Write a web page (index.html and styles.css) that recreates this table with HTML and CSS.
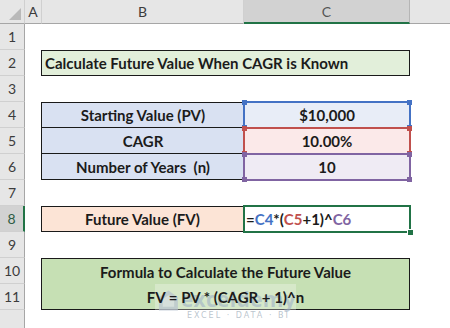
FILE: index.html
```html
<!DOCTYPE html>
<html>
<head>
<meta charset="utf-8">
<link rel="stylesheet" href="styles.css">
</head>
<body>
<div class="sheet">
  <div class="corner"><svg width="25" height="24" viewBox="0 0 25 24"><polygon points="21,8 21,20 9,20" fill="#b9b9b9"/></svg></div>
  <div class="ch">A</div>
  <div class="ch">B</div>
  <div class="ch sel">C</div>
  <div class="ch last"></div>

  <div class="rh r1">1</div>
  <div class="rh r2">2</div>
  <div class="rh r3">3</div>
  <div class="rh r4">4</div>
  <div class="rh r5">5</div>
  <div class="rh r6">6</div>
  <div class="rh r7">7</div>
  <div class="rh rsel r8">8</div>
  <div class="rh r9">9</div>
  <div class="rh r10">10</div>
  <div class="rh r11">11</div>
  <div class="rh r12"></div>

  <div class="cell title r2">Calculate Future Value When CAGR is Known</div>

  <div class="cell label r4 first">Starting Value (PV)</div>
  <div class="cell label r5">CAGR</div>
  <div class="cell label r6">Number of Years&nbsp; (n)</div>

  <div class="cell val v-blue r4">$10,000<span class="hl blue"><i class="tl"></i><i class="tr"></i><i class="bl"></i><i class="br"></i></span></div>
  <div class="cell val v-red r5">10.00%<span class="hl red"><i class="tl"></i><i class="tr"></i><i class="bl"></i><i class="br"></i></span></div>
  <div class="cell val v-purple r6">10<span class="hl purple"><i class="tl"></i><i class="tr"></i><i class="bl"></i><i class="br"></i></span></div>

  <div class="cell fvlabel r8">Future Value (FV)</div>
  <div class="cell formula r8">=<span class="c-blue">C4</span>*(<span class="c-red">C5</span>+1)^<span class="c-purple">C6</span><span class="active"><i></i></span></div>

  <div class="cell note">
    <div class="watermark">
      <svg class="wm-logo" width="22" height="24" viewBox="0 0 22 24"><polygon points="11,1 21,8 21,22 1,22 1,8" fill="#b7c3cf"/><polygon points="11,6 17,10 17,18 5,18 5,10" fill="#d6dde4"/></svg>
      <div class="wm-text">
        <div class="wm-name">exceldemy</div>
        <div class="wm-sub">EXCEL · DATA · BI</div>
      </div>
    </div>
    <div class="line">Formula to Calculate the Future Value</div>
    <div class="line">FV = PV * (CAGR + 1)^n</div>
  </div>
</div>
</body>
</html>
```
FILE: styles.css
```css
html, body {
  margin: 0;
  padding: 0;
  background: #ffffff;
}
body {
  font-family: Lato, "Open Sans", sans-serif;
  color: #1b1b1b;
}
.sheet {
  position: relative;
  display: grid;
  grid-template-columns: 25px 17px 202px 166px 40px;
  grid-template-rows: 24px repeat(12, 26px);
  width: 450px;
  height: 328px;
  overflow: hidden;
}
.corner {
  background: #e6e6e6;
  border-right: 1px solid #d0d0d0;
  border-bottom: 1px solid #a6a6a6;
  box-sizing: border-box;
}
.corner svg { display: block; }
.ch {
  background: #e6e6e6;
  border-right: 1px solid #d0d0d0;
  border-bottom: 1px solid #a6a6a6;
  box-sizing: border-box;
  display: flex;
  align-items: center;
  justify-content: center;
  color: #3c3c3c;
  font-size: 14px;
}
.ch.sel {
  background: #d2d2d2;
  border-bottom: 2px solid #217346;
  border-right: 1px solid #b5b5b5;
  color: #555;
}
.ch.last { border-right: none; }
.rh {
  grid-column: 1;
  background: #e6e6e6;
  border-right: 1px solid #a6a6a6;
  border-bottom: 1px solid #d0d0d0;
  box-sizing: border-box;
  display: flex;
  align-items: center;
  justify-content: center;
  color: #3c3c3c;
  font-size: 14px;
}
.rh.rsel {
  background: #d2d2d2;
  border-right: 2px solid #217346;
  color: #2e5d44;
}
.r1 { grid-row: 2; }
.r2 { grid-row: 3; }
.r3 { grid-row: 4; }
.r4 { grid-row: 5; }
.r5 { grid-row: 6; }
.r6 { grid-row: 7; }
.r7 { grid-row: 8; }
.r8 { grid-row: 9; }
.r9 { grid-row: 10; }
.r10 { grid-row: 11; }
.r11 { grid-row: 12; }
.r12 { grid-row: 13; }

.cell {
  box-sizing: border-box;
  font-weight: 700;
  font-size: 15px;
  display: flex;
  align-items: center;
  white-space: nowrap;
}
.title {
  grid-column: 3 / 5;
  margin-left: -1px;
  background: #e2efda;
  border: 1px solid #1a1a1a;
  padding-left: 3px;
}
.label {
  grid-column: 3;
  margin-left: -1px;
  background: #d9e1f2;
  border-left: 1px solid #1a1a1a;
  border-bottom: 1px solid #1a1a1a;
  justify-content: center;
}
.label.first { border-top: 1px solid #1a1a1a; }
.val {
  grid-column: 4;
  position: relative;
  justify-content: center;
}
.v-blue { background: #e8edf7; }
.v-red { background: #fbe9e9; }
.v-purple { background: #efebf4; }
.hl {
  position: absolute;
  left: -1px;
  right: -1px;
  top: -1px;
  bottom: -1px;
  border: 2px solid currentColor;
}
.hl.blue { color: #4472c4; }
.hl.red { color: #c0504d; }
.hl.purple { color: #8064a2; }
.hl i {
  position: absolute;
  width: 5px;
  height: 5px;
  background: currentColor;
}
.hl .tl { left: -3px; top: -3px; }
.hl .tr { right: -3px; top: -3px; }
.hl .bl { left: -3px; bottom: -3px; }
.hl .br { right: -3px; bottom: -3px; }

.fvlabel {
  grid-column: 3;
  margin-left: -1px;
  background: #fce4d6;
  border: 1px solid #1a1a1a;
  justify-content: center;
}
.formula {
  grid-column: 4;
  position: relative;
  padding-left: 2px;
}
.c-blue { color: #4472c4; }
.c-red { color: #c0504d; }
.c-purple { color: #8064a2; }
.active {
  position: absolute;
  left: -1px;
  right: -1px;
  top: -1px;
  bottom: -1px;
  border: 2px solid #217346;
}
.active i {
  position: absolute;
  right: -4px;
  bottom: -4px;
  width: 5px;
  height: 5px;
  background: #217346;
  border-left: 1px solid #fff;
  border-top: 1px solid #fff;
}
.note {
  grid-column: 3 / 5;
  grid-row: 11 / 13;
  margin-left: -1px;
  position: relative;
  background: #c6e0b4;
  border: 1px solid #1a1a1a;
  display: grid;
  grid-template-rows: 1fr 1fr;
  justify-items: center;
  align-items: center;
}
.line {
  position: relative;
  z-index: 1;
}
.watermark {
  position: absolute;
  z-index: 0;
  left: 113px;
  top: 25px;
  width: 141px;
  height: 44px;
  background: rgba(255, 255, 255, 0.28);
  display: flex;
  align-items: flex-start;
  gap: 2px;
  padding: 3px 0 0 3px;
  box-sizing: border-box;
  font-weight: 400;
}
.wm-logo { display: block; margin-top: 2px; opacity: 0.7; }
.wm-text { display: flex; flex-direction: column; align-items: center; }
.wm-name {
  font-family: "Open Sans", sans-serif;
  font-size: 21px;
  font-weight: 700;
  color: rgba(160, 178, 198, 0.6);
  line-height: 24px;
  letter-spacing: 0.3px;
}
.wm-sub {
  font-family: "DejaVu Sans", sans-serif;
  font-size: 8px;
  color: rgba(170, 182, 194, 0.8);
  letter-spacing: 2px;
  line-height: 10px;
}
```
